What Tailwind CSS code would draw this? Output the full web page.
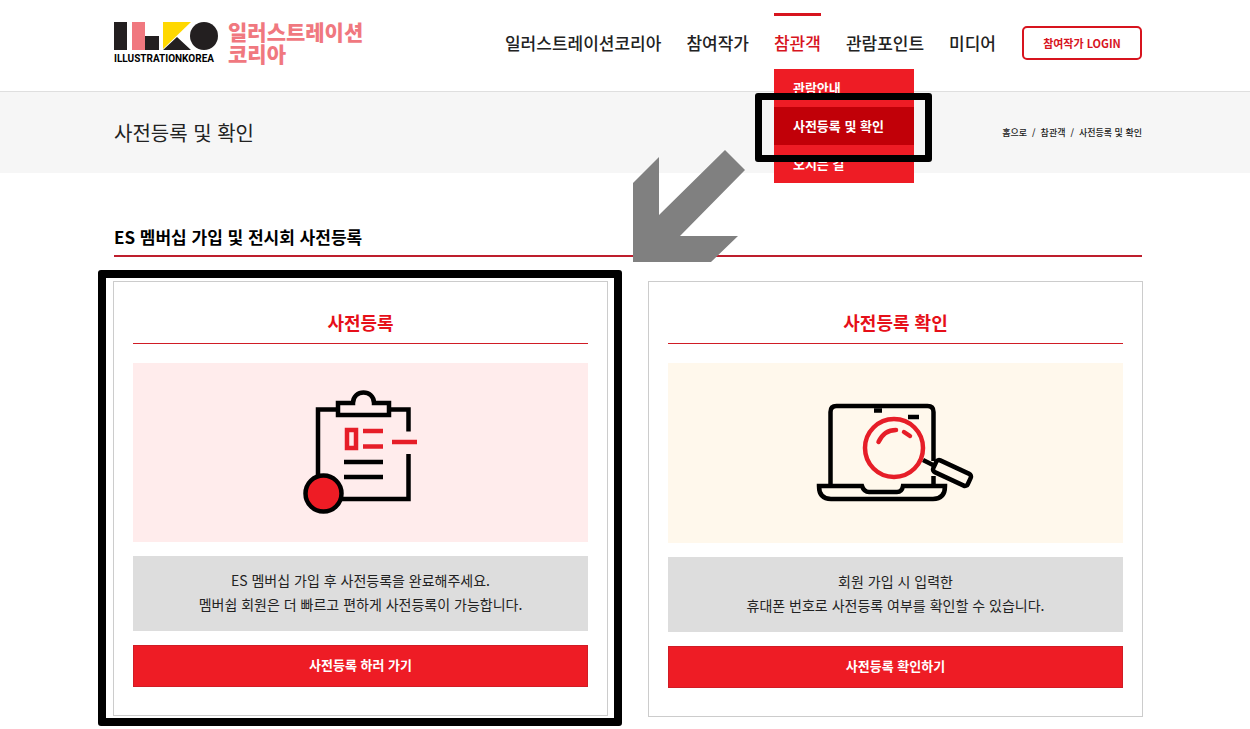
<!DOCTYPE html>
<html lang="ko">
<head>
  <meta charset="UTF-8" />
  <meta name="viewport" content="width=device-width, initial-scale=1" />
  <title>사전등록 및 확인 - 일러스트레이션코리아</title>
  <script src="https://cdn.jsdelivr.net/npm/@tailwindcss/browser@4"></script>
</head>
<body class="bg-white font-['Noto_Sans_CJK_KR',sans-serif] text-[#222] overflow-x-hidden">
  <!-- Header -->
  <header class="border-b border-[#dfdfdf] pl-1.5">
    <div class="max-w-[1028px] h-[91px] mx-auto flex justify-between items-start">
      <a href="#" class="flex items-start gap-2.5 pt-[22px]">
        <span class="flex flex-col w-[104px]">
          <svg width="104" height="28" viewBox="0 0 104 28" aria-hidden="true">
            <path fill="#231f20" d="M0 0h13v28H0zM31 14h14v14H31zM49 28l14-13 14 13z" />
            <path fill="#f0787f" d="M18 0h13v28H18z" />
            <path fill="#ffd800" d="M49 0h28L49 27z" />
            <circle fill="#231f20" cx="90" cy="14" r="14" />
          </svg>
          <span class="font-[Roboto] font-bold text-[10px] leading-[18px] whitespace-nowrap text-black">ILLUSTRATIONKOREA</span>
        </span>
        <span class="text-[21px] leading-[22px] font-black text-[#f0787f] -mt-0.5">일러스트레이션<br />코리아</span>
      </a>

      <nav class="flex items-center gap-[26px] pt-[13px]">
        <ul class="flex gap-[25px] text-[17px] font-medium whitespace-nowrap">
          <li><a href="#" class="flex items-center h-[60px]">일러스트레이션코리아</a></li>
          <li><a href="#" class="flex items-center h-[60px]">참여작가</a></li>
          <li class="relative">
            <a href="#" class="flex items-center h-[60px] border-y-3 border-t-[#d7141e] border-b-transparent text-[#d7141e]">참관객</a>
            <!-- Sub menu -->
            <ul class="absolute z-10 left-0 top-14 w-[140px] bg-[#ee1c25] text-white text-[13px] font-bold">
              <li><a href="#" class="flex items-center h-[38px] px-[19px]">관람안내</a></li>
              <li class="relative">
                <a href="#" class="flex items-center h-[38px] px-[19px] bg-[#c10008]">사전등록 및 확인</a>
                <span class="absolute z-10 -left-[19px] -right-[18px] -top-3.5 -bottom-[17px] border-7 border-black rounded-[3px] pointer-events-none"></span>
              </li>
              <li><a href="#" class="flex items-center h-[38px] px-[19px]">오시는 길</a></li>
            </ul>
          </li>
          <li><a href="#" class="flex items-center h-[60px]">관람포인트</a></li>
          <li><a href="#" class="flex items-center h-[60px]">미디어</a></li>
        </ul>
        <button type="button" class="w-[120px] h-[34px] border-2 border-[#d7141e] rounded-[5px] text-[#d7141e] text-[11px] font-bold">참여작가 LOGIN</button>
      </nav>
    </div>
  </header>

  <!-- Page title -->
  <div class="bg-[#f6f6f6] pl-1.5">
    <div class="max-w-[1028px] h-[81px] mx-auto flex justify-between items-center">
      <h1 class="text-xl">사전등록 및 확인</h1>
      <div class="flex gap-[5px] text-[9px] font-medium">
        <a href="#">홈으로</a><span>/</span><a href="#">참관객</a><span>/</span><a href="#">사전등록 및 확인</a>
      </div>
    </div>
  </div>

  <!-- Content -->
  <main class="pl-1.5 pt-[50px] pb-3">
    <div class="relative max-w-[1030px] mx-auto">
      <h2 class="mx-px text-[17px] leading-7 pb-1 font-bold text-black border-b-2 border-[#be1e2d]">ES 멤버십 가입 및 전시회 사전등록</h2>

      <!-- Arrow from the menu to the card -->
      <svg class="absolute left-[520px] -top-[73px]" width="112" height="112" viewBox="0 0 112 112" aria-hidden="true">
        <path fill="#808080" d="M0 33L26 7v58L92 0l20 20-65 66h58l-27 26H0z" />
      </svg>

      <div class="grid grid-cols-2 gap-10 items-start mt-6">
        <section class="relative border border-[#ccc] px-[19px] pb-7">
          <span class="absolute -left-4 -right-[15px] -top-3 -bottom-[11px] border-8 border-black rounded-[3px] pointer-events-none"></span>
          <h3 class="pt-[26px] pb-[7px] text-lg leading-7 font-bold text-center text-[#e60f19] border-b border-[#d01c25]">사전등록</h3>
          <div class="mt-[19px] h-[179px] pt-[17px] flex justify-center items-start bg-[#ffecec]">
            <svg width="140" height="140" viewBox="1 1 140 140" fill="none" stroke="#000" stroke-width="4.500" aria-hidden="true">
              <path d="M28 98V30.500h18M100 30.500h18.500v22M118.500 75v45H50" />
              <path d="M48 24h15c0-14 21-14 21 0h15v12H48z" />
              <path d="M54 83h39M54 98h39" />
              <path stroke="#e61e28" d="M57 51h9v18h-9zM73 52h20M73 67.500h20M102 63h25" />
              <circle cx="33.500" cy="114.500" r="18" fill="#ee1c25" />
            </svg>
          </div>
          <p class="mt-3.5 h-[75px] pb-1 flex flex-col justify-center bg-[#ddd] text-sm leading-6 text-center">ES 멤버십 가입 후 사전등록을 완료해주세요.<br />멤버쉽 회원은 더 빠르고 편하게 사전등록이 가능합니다.</p>
          <button type="button" class="mt-3.5 w-full h-[42px] pb-0.5 block bg-[#ee1c25] border border-[#d01c25] text-white text-[13px] font-bold">사전등록 하러 가기</button>
        </section>

        <section class="border border-[#ccc] px-[19px] pb-7">
          <h3 class="pt-[26px] pb-[7px] text-lg leading-7 font-bold text-center text-[#e60f19] border-b border-[#d01c25]">사전등록 확인</h3>
          <div class="mt-[19px] h-[180px] pt-[27px] flex justify-center items-start bg-[#fff8ec]">
            <svg width="170" height="120" viewBox="1 0 170 120" fill="none" stroke="#000" stroke-width="4.500" aria-hidden="true">
              <path d="M20.500 95V22q0-6 6-6h91q6 0 6 6v49M123.500 86v9" />
              <path d="M9 96h43q2 6 7 6h28q5 0 6-6h42q0 13-12 13H21Q9 109 9 96z" />
              <path d="M64 20.500h8M98 27h11" />
              <path d="M113 70l10 5" />
              <rect x="-19" y="-6.500" width="38" height="13" rx="3" transform="translate(142 83) rotate(25)" />
              <g stroke="#e61e28">
                <circle cx="84" cy="58" r="29" />
                <path stroke-linecap="round" d="M68.500 52Q74 40 86 40M94 42l6 4" />
              </g>
            </svg>
          </div>
          <p class="mt-3.5 h-[75px] pb-1 flex flex-col justify-center bg-[#ddd] text-sm leading-6 text-center">회원 가입 시 입력한<br />휴대폰 번호로 사전등록 여부를 확인할 수 있습니다.</p>
          <button type="button" class="mt-3.5 w-full h-[42px] pb-0.5 block bg-[#ee1c25] border border-[#d01c25] text-white text-[13px] font-bold">사전등록 확인하기</button>
        </section>
      </div>
    </div>
  </main>
</body>
</html>
